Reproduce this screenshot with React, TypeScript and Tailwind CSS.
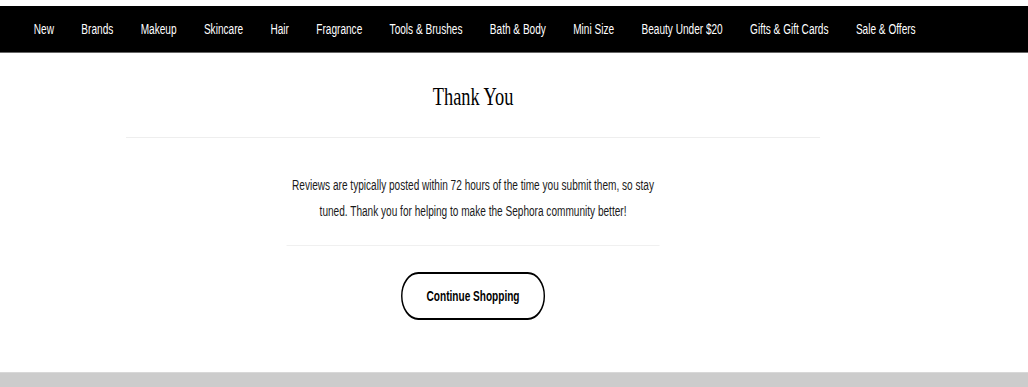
import React from 'react'

const navItems = [
  'New',
  'Brands',
  'Makeup',
  'Skincare',
  'Hair',
  'Fragrance',
  'Tools & Brushes',
  'Bath & Body',
  'Mini Size',
  'Beauty Under $20',
  'Gifts & Gift Cards',
  'Sale & Offers',
]

export default function App() {
  return (
    <div className="w-[1028px] h-[387px] overflow-hidden bg-white font-['Liberation_Sans',Arial,sans-serif]">
      {/* the whole page is drawn narrow, so lay it out wide and squeeze it */}
      <div className="w-[1428px] origin-top-left scale-x-[0.72]">
        <nav className="mt-[6px] h-[47px] bg-black border-b border-[#666] flex items-center gap-[38px] pl-[47px]">
          {navItems.map((item) => (
            <span key={item} className="text-white text-[14px] whitespace-nowrap">
              {item}
            </span>
          ))}
        </nav>

        <main className="w-[1314px] flex flex-col items-center">
          <h1 className="mt-[29px] text-[25.5px] leading-[30px] text-black font-['Liberation_Serif','Times_New_Roman',serif]">
            Thank You
          </h1>
          <div className="mt-[25px] w-[964px] h-px bg-[#eeeeee]" />

          <p className="mt-[34px] w-[518px] text-center text-[14px] leading-[26px] text-[#1a1a1a]">
            Reviews are typically posted within 72 hours of the time you submit them, so stay tuned. Thank you for
            helping to make the Sephora community better!
          </p>
          <div className="mt-[21px] w-[518px] h-px bg-[#f0f0f0]" />

          <button className="mt-[26px] w-[200px] h-[48px] rounded-full border-2 border-black bg-white text-[14px] font-bold text-black">
            Continue Shopping
          </button>
        </main>
      </div>
      <div className="mt-[52px] h-[20px] bg-[#cccccc] border-t border-[#d8d8d8]" />
    </div>
  )
}
